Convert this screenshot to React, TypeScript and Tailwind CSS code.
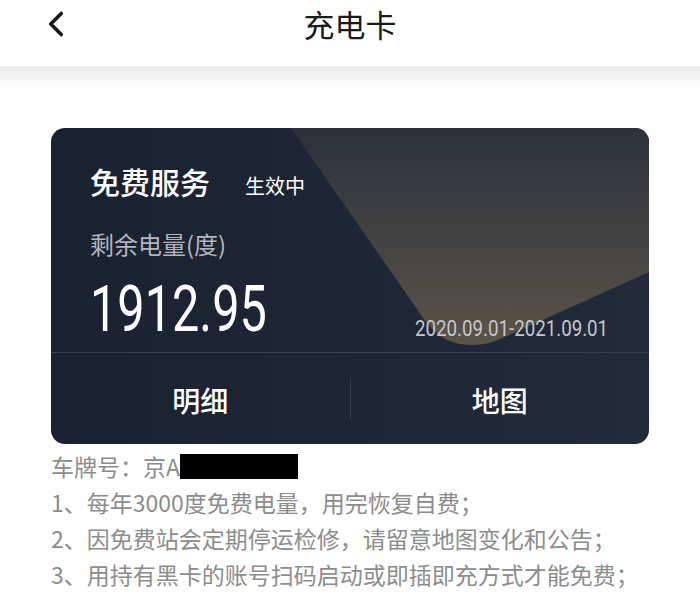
import { ChevronLeft } from "lucide-react";

const notes = [
  "1、每年3000度免费电量，用完恢复自费；",
  "2、因免费站会定期停运检修，请留意地图变化和公告；",
  "3、用持有黑卡的账号扫码启动或即插即充方式才能免费；",
];

export default function App() {
  return (
    <div
      className="w-[700px] h-[597px] bg-white overflow-hidden text-[#1a1a1a]"
      style={{ fontFamily: '"Noto Sans CJK SC", "Noto Sans", sans-serif' }}
    >
      {/* Header */}
      <header className="h-[66px] relative flex items-center justify-center">
        <ChevronLeft className="absolute left-[35px] top-[3px] w-[42px] h-[42px]" strokeWidth={2.1} />
        <h1 className="text-[31px] leading-none -mt-[20px]">充电卡</h1>
      </header>
      <div className="h-[22px] bg-gradient-to-b from-[#ebebeb] to-white" />

      {/* Card */}
      <section className="px-[51px] pt-[40px]">
        <div className="relative h-[316px] rounded-[14px] overflow-hidden bg-gradient-to-r from-[#1a2131] to-[#232a39] text-white flex flex-col">
          <svg className="absolute inset-0" width="598" height="316" viewBox="0 0 598 316">
            <defs>
              <linearGradient id="gold" x1="0" y1="0" x2="0" y2="1">
                <stop offset="0" stopColor="#2c313c" />
                <stop offset="1" stopColor="#5a5449" />
              </linearGradient>
            </defs>
            <path d="M240 0 L598 0 L598 144 L456 208 Q424 224 396 212 Q380 204 368 184 Z" fill="url(#gold)" />
          </svg>

          <div className="relative flex-1 px-[39px] pt-[38px]">
            <div className="flex items-baseline">
              <span className="text-[30px] font-medium leading-none">免费服务</span>
              <span className="ml-[35px] text-[20px] leading-none">生效中</span>
            </div>
            <div className="mt-[36px] text-[24px] leading-none text-[#b3b6bd]">剩余电量(度)</div>
            <div className="flex items-end justify-between mt-[22px]">
              <span
                className="text-[64px] leading-none origin-left scale-x-[0.76] inline-block"
                style={{ fontFamily: "Roboto, sans-serif" }}
              >
                1912.95
              </span>
              <span
                className="text-[22px] leading-none text-[#c5c7cc] origin-right scale-x-[0.85] inline-block mr-[2px] mb-[2px]"
                style={{ fontFamily: "Roboto, sans-serif" }}
              >
                2020.09.01-2021.09.01
              </span>
            </div>
          </div>

          <div className="relative h-[92px] border-t border-[#3a4150] flex items-center">
            <div className="flex-1 text-center text-[28px] font-medium pt-[2px]">明细</div>
            <div className="w-px h-[40px] bg-[#394050]" />
            <div className="flex-1 text-center text-[28px] font-medium pt-[2px]">地图</div>
          </div>
        </div>
      </section>

      {/* Notes */}
      <section className="px-[51px] pt-[4px] text-[23px] text-[#8c8c8c] leading-[36px]">
        <div className="flex items-center">
          <span>车牌号：京A</span>
          <span className="w-[118px] h-[25px] bg-black" />
        </div>
        {notes.map((n) => (
          <div key={n}>{n}</div>
        ))}
      </section>
    </div>
  );
}
